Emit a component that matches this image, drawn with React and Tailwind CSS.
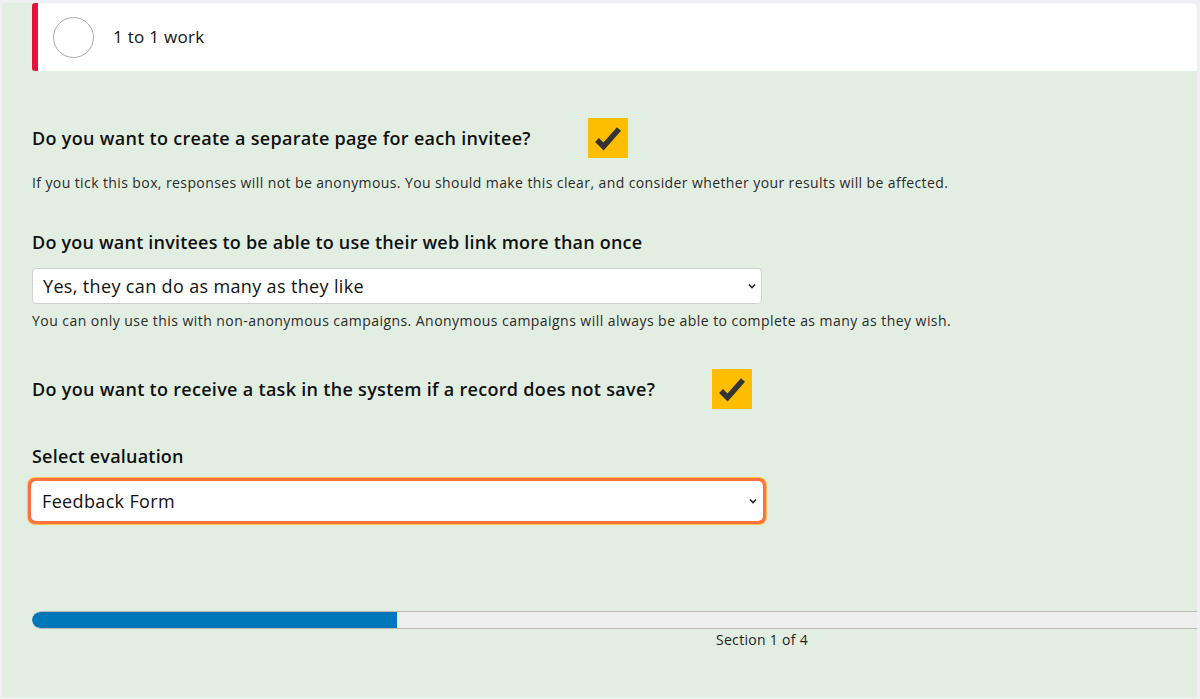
import React from "react";

function Check() {
  return (
    <div className="w-10 h-10 bg-[#ffbd00] flex items-center justify-center shrink-0">
      <svg width="40" height="40" viewBox="0 0 40 40">
        <polyline points="9,22 15.5,28.5 31,11" fill="none" stroke="#333" strokeWidth="5.5" strokeLinejoin="miter" strokeLinecap="butt" />
      </svg>
    </div>
  );
}

function Chevron() {
  return (
    <svg width="10" height="8" viewBox="0 0 10 8">
      <polyline points="2,2.5 5,5.5 8,2.5" fill="none" stroke="#222" strokeWidth="1.6" />
    </svg>
  );
}

export default function App() {
  return (
    <div className="w-[1200px] h-[699px] bg-[#f0eff4] pt-[3px] pl-[2px] pr-[3px] pb-[2px] overflow-hidden" style={{ fontFamily: "'Open Sans', 'Noto Sans', sans-serif" }}>
      <div className="w-full h-full bg-[#e3eee2] rounded-tr-[6px] rounded-tl-[3px] overflow-hidden text-[#111]">
        <div className="ml-[30px] h-[68px] bg-white rounded-l-[3px] border-l-[6px] border-[#e2133f] flex items-center">
          <div className="ml-[15px] w-[41px] h-[41px] rounded-full border border-[#a8a8a8]" />
          <div className="ml-[19px] text-[17px] tracking-[0.3px] text-[#111]">1 to 1 work</div>
        </div>

        <div className="pl-[30px]">
          <div className="mt-[47px] h-10 flex items-center">
            <div className="w-[556px] text-[18px] font-semibold tracking-[0.3px]">Do you want to create a separate page for each invitee?</div>
            <Check />
          </div>
          <div className="mt-[16px] text-[14px] leading-[18px] tracking-[0.4px] text-[#2a2a2a]">If you tick this box, responses will not be anonymous. You should make this clear, and consider whether your results will be affected.</div>

          <div className="mt-[38px] text-[18px] leading-[24px] font-semibold tracking-[0.2px]">Do you want invitees to be able to use their web link more than once</div>
          <div className="mt-[14px] w-[730px] h-[36px] bg-white border border-[#cfcfcf] rounded-[4px] flex items-center justify-between pl-[10px] pr-[4px]">
            <span className="text-[18px] tracking-[0.35px]">Yes, they can do as many as they like</span>
            <Chevron />
          </div>
          <div className="mt-[8px] text-[14px] leading-[18px] tracking-[0.45px] text-[#2a2a2a]">You can only use this with non-anonymous campaigns. Anonymous campaigns will always be able to complete as many as they wish.</div>

          <div className="mt-[39px] h-10 flex items-center">
            <div className="w-[680px] text-[18px] font-semibold tracking-[0.3px]">Do you want to receive a task in the system if a record does not save?</div>
            <Check />
          </div>

          <div className="mt-[35px] text-[18px] leading-[24px] font-semibold tracking-[0.2px]">Select evaluation</div>
          <div className="mt-[10px] -ml-[4px] w-[738px] h-[46px] rounded-[7px] bg-[#ff7240] p-[3px] shadow-[0_0_0_1px_#ffc24a]">
            <div className="w-full h-full bg-white rounded-[5px] flex items-center justify-between pl-[11px] pr-[5px]">
              <span className="text-[18px] tracking-[0.35px]">Feedback Form</span>
              <Chevron />
            </div>
          </div>

          <div className="mt-[87px] w-[1460px] h-[18px] bg-[#eeeeee] border-y border-[#b9b9b9] rounded-l-[9px] overflow-hidden flex">
            <div className="w-1/4 h-full bg-[#0077b9] rounded-l-[9px]" />
          </div>
          <div className="w-[1460px] text-center text-[14px] leading-[20px] tracking-[0.3px] text-[#222] mt-[1px]">Section 1 of 4</div>
        </div>
      </div>
    </div>
  );
}
